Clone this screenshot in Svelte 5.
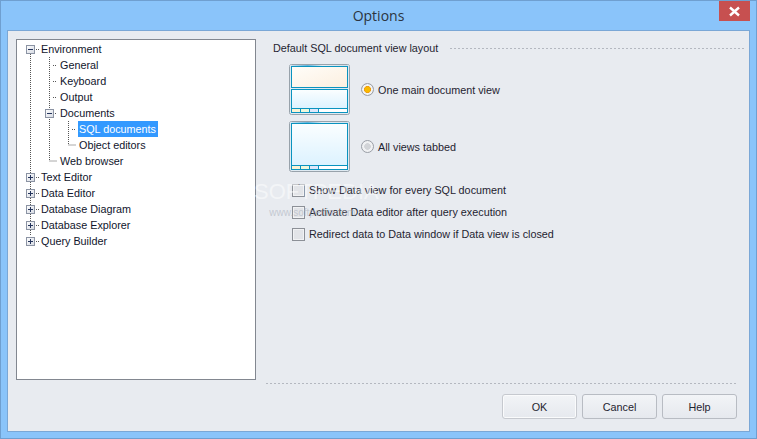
<script>
    const tree = [
        { label: 'Environment', depth: 0 },
        { label: 'General', depth: 1 },
        { label: 'Keyboard', depth: 1 },
        { label: 'Output', depth: 1 },
        { label: 'Documents', depth: 1 },
        { label: 'SQL documents', depth: 2, selected: true },
        { label: 'Object editors', depth: 2 },
        { label: 'Web browser', depth: 1 },
        { label: 'Text Editor', depth: 0 },
        { label: 'Data Editor', depth: 0 },
        { label: 'Database Diagram', depth: 0 },
        { label: 'Database Explorer', depth: 0 },
        { label: 'Query Builder', depth: 0 }
    ];

    // expander boxes, page coordinates of the box centre
    const boxes = [
        { x: 30, y: 49, open: true },
        { x: 49, y: 113, open: true },
        { x: 30, y: 177 },
        { x: 30, y: 193 },
        { x: 30, y: 209 },
        { x: 30, y: 225 },
        { x: 30, y: 241 }
    ];

    const guides = [
        'M30.5 54V236',
        'M49.5 57V161H57',
        'M68.5 121V145H76',
        'M36 49.5H39',
        'M53 65.5H57', 'M53 81.5H57', 'M53 97.5H57', 'M55 113.5H57',
        'M72 129.5H76',
        'M36 177.5H39', 'M36 193.5H39', 'M36 209.5H39', 'M36 225.5H39', 'M36 241.5H39'
    ];

    const checks = [
        'Show Data view for every SQL document',
        'Activate Data editor after query execution',
        'Redirect data to Data window if Data view is closed'
    ];
</script>

<div class="window">
    <header class="titlebar">
        <span></span>
        <span class="title">Options</span>
        <button class="close" aria-label="Close">
            <svg width="13" height="11" viewBox="0 0 13 11">
                <path d="M2 1.5 11 9.5M11 1.5 2 9.5" stroke="#fff" stroke-width="2.4" />
            </svg>
        </button>
    </header>

    <div class="dialog">
        <div class="tree">
            <svg class="guides" width="238" height="339" viewBox="17 40 238 339">
                <defs>
                    <linearGradient id="boxfill" x1="0" y1="0" x2="1" y2="1">
                        <stop offset="0" stop-color="#fff" />
                        <stop offset="1" stop-color="#d5d9e2" />
                    </linearGradient>
                </defs>
                {#each guides as d}
                    <path {d} fill="none" stroke="#555" stroke-dasharray="1 1" />
                {/each}
                {#each boxes as b}
                    <rect x={b.x - 3.5} y={b.y - 3.5} width="8" height="8" fill="url(#boxfill)" stroke="#8b93a3" />
                    <path d="M{b.x - 2} {b.y + 0.5}H{b.x + 3}" stroke="#24345c" />
                    {#if !b.open}
                        <path d="M{b.x + 0.5} {b.y - 2}V{b.y + 3}" stroke="#24345c" />
                    {/if}
                {/each}
            </svg>
            {#each tree as item}
                <div class="row" style="padding-left: {23 + item.depth * 19}px">
                    <span class="label" class:selected={item.selected}>{item.label}</span>
                </div>
            {/each}
        </div>

        <div class="pane">
            <div class="section">
                <span>Default SQL document view layout</span>
                <i class="dots"></i>
            </div>

            <div class="layouts">
                <label class="layout">
                    <svg class="thumb" width="61" height="51" viewBox="0 0 61 51">
                        <defs>
                            <linearGradient id="frame" x1="0" y1="0" x2="1" y2="0">
                                <stop offset="0" stop-color="#d6e6f1" />
                                <stop offset="0.3" stop-color="#5fb3dc" />
                                <stop offset="0.55" stop-color="#e3edf4" />
                                <stop offset="1" stop-color="#cfe0ec" />
                            </linearGradient>
                            <linearGradient id="warm" x1="0" y1="0" x2="1" y2="1">
                                <stop offset="0" stop-color="#fffdf9" />
                                <stop offset="1" stop-color="#fcefdf" />
                            </linearGradient>
                            <linearGradient id="cool" x1="0" y1="0" x2="0" y2="1">
                                <stop offset="0" stop-color="#fbfeff" />
                                <stop offset="1" stop-color="#dcf2ff" />
                            </linearGradient>
                        </defs>
                        <rect x="0.5" y="0.5" width="60" height="50" rx="2" fill="#dfeaf2" stroke="#98a2ab" />
                        <rect x="1" y="1" width="59" height="1.5" fill="url(#frame)" />
                        <rect x="2.5" y="2.5" width="56" height="21" fill="url(#warm)" stroke="#0a93bf" />
                        <rect x="2.5" y="25.5" width="56" height="19" fill="url(#cool)" stroke="#0a93bf" />
                        <rect x="2.5" y="44.5" width="56" height="4" fill="#fff" stroke="#0a93bf" />
                        <rect x="3" y="45" width="9" height="3" fill="#fbf3d4" />
                        <rect x="12" y="45" width="9" height="3" fill="#eef8dc" />
                        <rect x="21" y="45" width="9" height="3" fill="#dfe8fb" />
                        <path d="M11.5 45V48M20.5 45V48M29.5 45V48" stroke="#0a93bf" />
                    </svg>
                    <input type="radio" name="view" checked />
                    <span>One main document view</span>
                </label>
                <label class="layout">
                    <svg class="thumb" width="61" height="51" viewBox="0 0 61 51">
                        <rect x="0.5" y="0.5" width="60" height="50" rx="2" fill="#dfeaf2" stroke="#98a2ab" />
                        <rect x="1" y="1" width="59" height="1.5" fill="url(#frame)" />
                        <rect x="2.5" y="2.5" width="56" height="42" fill="url(#cool)" stroke="#0a93bf" />
                        <rect x="2.5" y="44.5" width="56" height="4" fill="#fff" stroke="#0a93bf" />
                        <rect x="3" y="45" width="9" height="3" fill="#fbf3d4" />
                        <rect x="12" y="45" width="9" height="3" fill="#eef8dc" />
                        <rect x="21" y="45" width="9" height="3" fill="#dfe8fb" />
                        <path d="M11.5 45V48M20.5 45V48M29.5 45V48" stroke="#0a93bf" />
                    </svg>
                    <input type="radio" name="view" />
                    <span>All views tabbed</span>
                </label>
            </div>

            <div class="checks">
                {#each checks as text}
                    <label class="check">
                        <input type="checkbox" />
                        <span>{text}</span>
                    </label>
                {/each}
            </div>

            <footer class="footer">
                <i class="dots"></i>
                <div class="buttons">
                    <button class="default">OK</button>
                    <button>Cancel</button>
                    <button>Help</button>
                </div>
            </footer>
        </div>
    </div>

    <div class="watermark">
        <b>SOFTPEDIA</b>
        <small>www.softpedia.com</small>
    </div>
</div>

<style>
    :global(body) {
        margin: 0;
    }

    .window {
        position: relative;
        box-sizing: border-box;
        width: 757px;
        height: 439px;
        display: flex;
        flex-direction: column;
        padding: 0 6px 6px;
        background: #8ac4fa;
        border: 1px solid #6f9fd0;
        font-family: "Liberation Sans", sans-serif;
        font-size: 10.8px;
        color: #1f2430;
        overflow: hidden;
    }

    .titlebar {
        height: 29px;
        flex: none;
        display: grid;
        grid-template-columns: 1fr auto 1fr;
    }

    .title {
        font-family: "Open Sans", sans-serif;
        font-size: 14px;
        line-height: 29px;
        color: #2b3440;
    }

    .close {
        justify-self: end;
        width: 31px;
        height: 20px;
        padding: 0;
        border: none;
        border-radius: 0;
        background: #c75050;
        display: flex;
        align-items: center;
        justify-content: center;
    }

    .dialog {
        flex: 1;
        min-height: 0;
        display: flex;
        padding: 8px 12px 12px 8px;
        background: #e8ebf0;
        border: 1px solid #7aa7d6;
    }

    .tree {
        position: relative;
        box-sizing: border-box;
        width: 240px;
        height: 341px;
        flex: none;
        padding-top: 1px;
        background: #fff;
        border: 1px solid #828790;
        color: #10152c;
    }

    .guides {
        position: absolute;
        left: 0;
        top: 0;
    }

    .row {
        position: relative;
        height: 16px;
        line-height: 16px;
    }

    .label {
        display: inline-block;
        padding: 0 2px 0 1px;
    }

    .selected {
        background: #3399ff;
        color: #fff;
    }

    .pane {
        flex: 1;
        min-width: 0;
        margin-left: 9px;
        display: flex;
        flex-direction: column;
    }

    .section {
        display: flex;
        align-items: center;
        height: 18px;
        margin-right: -8px;
        padding-left: 8px;
    }

    .section .dots {
        flex: 1;
        margin-left: 12px;
    }

    .dots {
        display: block;
        height: 1px;
        background: repeating-linear-gradient(90deg, #b4b8c0 0 2px, transparent 2px 4px);
    }

    .layouts {
        margin: 7px 0 0 24px;
        display: flex;
        flex-direction: column;
        gap: 6px;
    }

    .layout {
        display: flex;
        align-items: center;
    }

    .thumb {
        margin-right: 11px;
    }

    input {
        appearance: none;
        margin: 0;
        flex: none;
    }

    input[type="radio"] {
        width: 13px;
        height: 13px;
        margin-right: 4px;
        border-radius: 50%;
        border: 1px solid #9a9ea6;
        background: radial-gradient(circle, #d2d4d8 0 3px, #f0f1f3 3.6px 5.5px);
    }

    input[type="radio"]:checked {
        background: radial-gradient(circle, #f8b900 0 2.5px, #ee9a10 3.2px, #f3f3f3 3.8px 5px, #d5d7da 5.5px);
    }

    .checks {
        margin: 10px 0 0 27px;
        display: flex;
        flex-direction: column;
        gap: 6px;
    }

    .check {
        display: flex;
        align-items: center;
        height: 16px;
    }

    input[type="checkbox"] {
        box-sizing: border-box;
        width: 13px;
        height: 13px;
        margin-right: 4px;
        border: 1px solid #8c9097;
        background: #e2e4e8;
        box-shadow: inset 0 0 0 1px #f1f2f4;
    }

    .footer {
        margin-top: auto;
    }

    .footer .dots {
        margin: 0 1px 10px;
    }

    .buttons {
        display: flex;
        justify-content: flex-end;
        gap: 5px;
    }

    .buttons button {
        width: 75px;
        height: 25px;
        padding: 0;
        border: 1px solid #b8bcc3;
        border-radius: 3px;
        background: linear-gradient(#f2f4f7, #e6e9ee);
        font: inherit;
        color: #1f2430;
    }

    .buttons .default {
        border-color: #c6c9cf;
        box-shadow: inset 0 0 0 1px #fafbfc;
    }

    .watermark {
        position: absolute;
        left: 253px;
        top: 180px;
        display: flex;
        flex-direction: column;
        align-items: center;
        color: rgba(255, 255, 255, 0.5);
        pointer-events: none;
    }

    .watermark b {
        font-weight: 400;
        font-size: 22px;
        line-height: 22px;
    }

    .watermark small {
        font-size: 10px;
        color: rgba(170, 176, 188, 0.6);
        line-height: 12px;
        margin: 4px 8px 0 0;
    }
</style>
